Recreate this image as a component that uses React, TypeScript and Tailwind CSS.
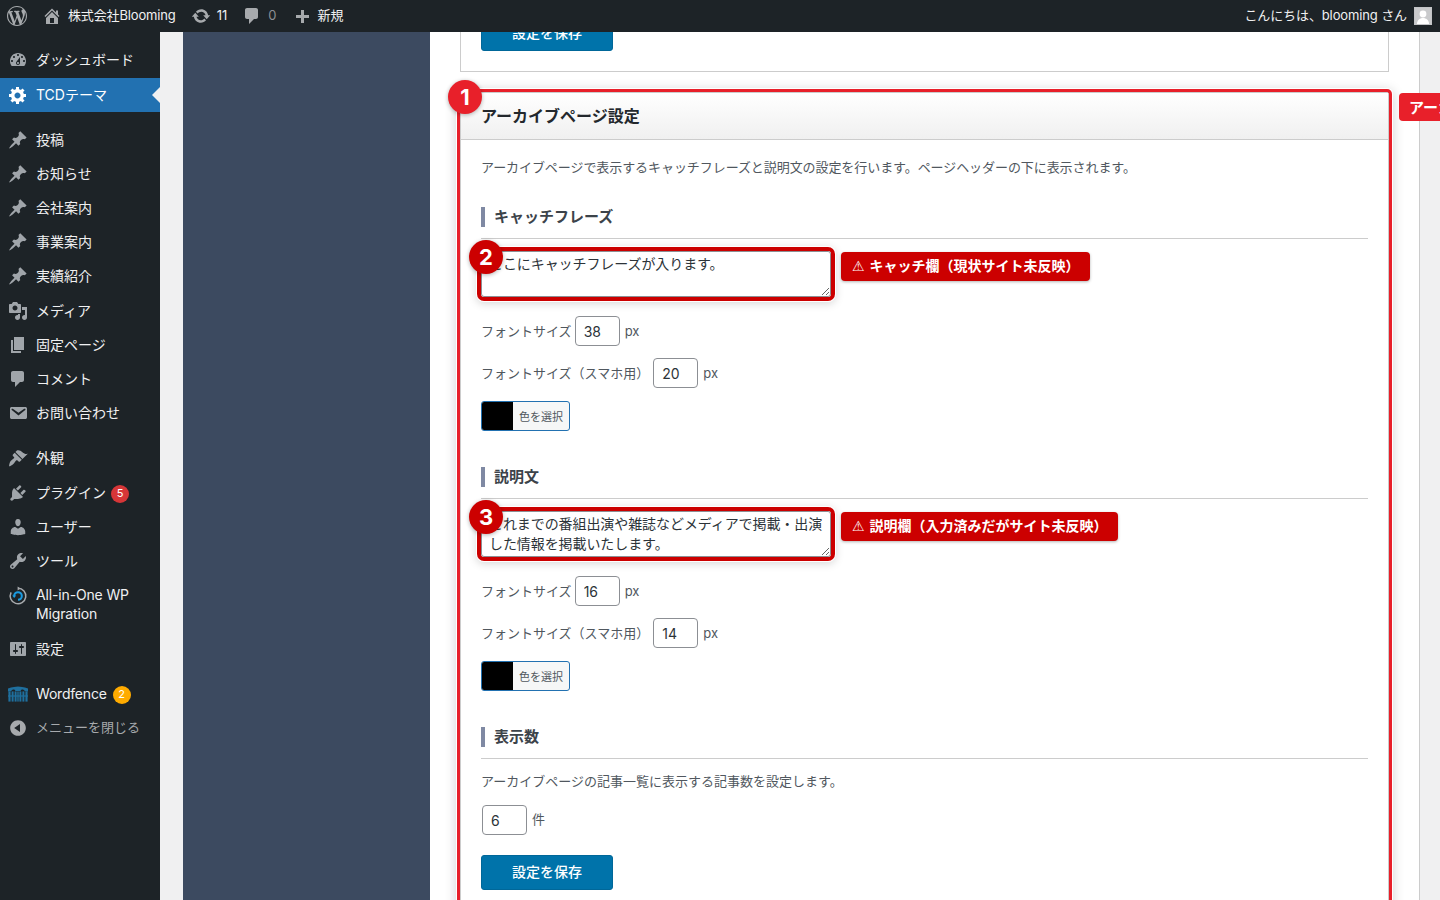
import React from "react";

const P: Record<string, string> = {
  wp: "M20 10c0-5.51-4.49-10-10-10C4.48 0 0 4.49 0 10c0 5.52 4.48 10 10 10 5.51 0 10-4.48 10-10zM7.78 15.37L4.37 6.22c.55-.02 1.17-.08 1.17-.08.5-.06.44-1.13-.06-1.11 0 0-1.45.11-2.37.11-.18 0-.37 0-.58-.01C4.12 2.69 6.87 1.11 10 1.11c2.33 0 4.45.87 6.05 2.34-.68-.11-1.65.39-1.65 1.58 0 .74.45 1.36.9 2.1.35.61.55 1.36.55 2.46 0 1.49-1.4 5-1.4 5l-3.03-8.37c.54-.02.82-.17.82-.17.5-.05.44-1.25-.06-1.22 0 0-1.44.12-2.38.12-.87 0-2.33-.12-2.33-.12-.5-.03-.56 1.2-.06 1.22l.92.08 1.26 3.41zM17.41 10c.24-.64.74-1.87.43-4.25.7 1.29 1.05 2.71 1.05 4.25 0 3.29-1.73 6.24-4.4 7.78.97-2.59 1.94-5.2 2.92-7.78zM6.1 18.09C3.12 16.65 1.11 13.53 1.11 10c0-1.3.23-2.48.72-3.59C3.25 10.3 4.67 14.2 6.1 18.09zm4.03-6.63l2.58 6.98c-.86.29-1.76.45-2.71.45-.79 0-1.57-.11-2.29-.33.81-2.38 1.62-4.74 2.42-7.1z",
  home: "M16 8.5l1.53 1.53-1.06 1.06L10 4.62l-6.47 6.47-1.06-1.06L10 2.5l4 4v-2h2v4zm-6-2.46l6 5.99V18H4v-5.97zM12 17v-5H8v5h4z",
  update: "M10.2 3.28c3.53 0 6.43 2.61 6.92 6h2.08l-3.5 4-3.5-4h2.32c-.45-1.97-2.21-3.45-4.32-3.45-1.45 0-2.73.71-3.54 1.78L4.95 5.66C6.23 4.2 8.11 3.28 10.2 3.28zm-.4 13.44c-3.52 0-6.43-2.61-6.92-6H.8l3.5-4c1.17 1.33 2.33 2.67 3.5 4H5.48c.45 1.97 2.21 3.45 4.32 3.45 1.45 0 2.73-.71 3.54-1.78l1.71 1.95c-1.28 1.46-3.15 2.38-5.25 2.38z",
  comment: "M5 2h9c1.1 0 2 .9 2 2v7c0 1.1-.9 2-2 2h-2l-5 5v-5H5c-1.1 0-2-.9-2-2V4c0-1.1.9-2 2-2z",
  plus: "M17 7v3h-5v5H9v-5H4V7h5V2h3v5h5z",
  dash: "M3.76 16h12.48c1.1-1.37 1.76-3.11 1.76-5 0-4.42-3.58-8-8-8s-8 3.58-8 8c0 1.89.66 3.63 1.76 5zM10 4c.55 0 1 .45 1 1s-.45 1-1 1-1-.45-1-1 .45-1 1-1zM6 6c.55 0 1 .45 1 1s-.45 1-1 1-1-.45-1-1 .45-1 1-1zm8 0c.55 0 1 .45 1 1s-.45 1-1 1-1-.45-1-1 .45-1 1-1zm-5.37 5.55L12 7v6c0 1.1-.9 2-2 2s-2-.9-2-2c0-.57.24-1.08.63-1.45zM4 10c.55 0 1 .45 1 1s-.45 1-1 1-1-.45-1-1 .45-1 1-1zm12 0c.55 0 1 .45 1 1s-.45 1-1 1-1-.45-1-1 .45-1 1-1zm-5 3c0-.55-.45-1-1-1s-1 .45-1 1 .45 1 1 1 1-.45 1-1z",
  gear: "M18 12h-2.18c-.17.7-.44 1.35-.81 1.93l1.54 1.54-2.1 2.1-1.54-1.54c-.58.36-1.23.63-1.91.79V19H8v-2.18c-.68-.16-1.33-.43-1.91-.79l-1.54 1.54-2.12-2.12 1.54-1.54c-.36-.58-.63-1.23-.79-1.91H1V9.03h2.17c.16-.7.44-1.35.8-1.94L2.43 5.55l2.1-2.1 1.54 1.54c.58-.37 1.24-.64 1.93-.81V2h3v2.18c.68.16 1.33.43 1.91.79l1.54-1.54 2.12 2.12-1.54 1.54c.36.59.64 1.24.8 1.94H18V12zm-8.5 1.5c1.66 0 3-1.34 3-3s-1.34-3-3-3-3 1.34-3 3 1.34 3 3 3z",
  pin: "M10.44 3.02l1.82-1.82 6.36 6.35-1.83 1.82c-1.05-.68-2.48-.57-3.41.36l-.75.75c-.92.93-1.04 2.35-.35 3.41l-1.83 1.82-2.41-2.41-2.8 2.79c-.42.42-3.38 2.71-3.8 2.29s1.86-3.39 2.28-3.81l2.79-2.79L4.1 9.36l1.83-1.82c1.05.69 2.48.57 3.4-.36l.75-.75c.93-.92 1.05-2.35.36-3.41z",
  media: "M13 11V4c0-.55-.45-1-1-1h-1.67L9 1H5L3.67 3H2c-.55 0-1 .45-1 1v7c0 .55.45 1 1 1h10c.55 0 1-.45 1-1zM7 4.5c1.38 0 2.5 1.12 2.5 2.5S8.38 9.5 7 9.5 4.5 8.38 4.5 7 5.62 4.5 7 4.5zM14 6h5v10.5c0 1.38-1.12 2.5-2.5 2.5S14 17.88 14 16.5s1.12-2.5 2.5-2.5c.17 0 .34.02.5.05V9h-3V6zm-4 8.05V13h2v3.5c0 1.38-1.12 2.5-2.5 2.5S7 17.88 7 16.5 8.12 14 9.5 14c.17 0 .34.02.5.05z",
  page: "M6 15V2h10v13H6zm-1 1h8v2H3V5h2v11z",
  mail: "M3.87 4h13.25C18.37 4 19 4.59 19 5.79v8.42c0 1.19-.63 1.79-1.88 1.79H3.87c-1.25 0-1.88-.6-1.88-1.79V5.79c0-1.2.63-1.79 1.88-1.79zm6.62 8.6l6.74-5.53c.24-.2.43-.66.13-1.07-.29-.41-.82-.42-1.17-.17l-5.7 3.86L4.8 5.83c-.35-.25-.88-.24-1.17.17-.3.41-.11.87.13 1.07z",
  brush: "M14.48 11.06L7.41 3.99l1.5-1.5c.5-.56 2.3-.47 3.51.32 1.21.8 1.43 1.28 2.91 2.1 1.18.64 2.45 1.26 4.45.85zm-.71.71L6.7 4.7 4.93 6.47c-.39.39-.39 1.02 0 1.41l1.06 1.06c.39.39.39 1.03 0 1.42-.6.6-1.43 1.11-2.21 1.69-.35.26-.7.53-1.01.84C1.5 14.2.9 18.1 1.2 18.3S4.3 17 5.58 15.7c.31-.31.58-.66.84-1.01.58-.78 1.09-1.61 1.69-2.21.39-.39 1.03-.39 1.42 0l1.06 1.06c.39.39 1.02.39 1.41 0z",
  plug: "M13.11 4.36L9.87 7.6 8 5.73l3.24-3.24c.35-.34 1.05-.2 1.56.32.52.51.66 1.21.31 1.55zm-8 1.77l.91-1.12 9.01 9.01-1.19.84c-.71.71-2.63 1.16-3.82 1.16H6.14L4.9 17.26c-.59.59-1.54.59-2.12 0-.59-.58-.59-1.53 0-2.12l1.24-1.24v-3.88c0-1.13.4-3.19 1.09-3.89zm7.26 3.97l3.24-3.24c.34-.35 1.04-.21 1.55.31.52.51.66 1.21.31 1.55l-3.24 3.25z",
  user: "M10 9.25c-2.27 0-2.73-3.44-2.73-3.44C7 4.02 7.82 2 9.97 2c2.16 0 2.98 2.02 2.71 3.81 0 0-.41 3.44-2.68 3.44zm0 2.57L12.72 10c2.39 0 4.52 2.33 4.52 4.53v2.49s-3.65 1.13-7.24 1.13c-3.65 0-7.24-1.13-7.24-1.13v-2.49c0-2.25 1.94-4.48 4.47-4.48z",
  tool: "M16.68 9.77c-1.34 1.34-3.3 1.67-4.95.99l-5.41 6.52c-.99.99-2.59.99-3.58 0s-.99-2.59 0-3.57l6.52-5.42c-.68-1.65-.35-3.61.99-4.95 1.28-1.28 3.12-1.62 4.72-1.06l-2.89 2.89 2.82 2.82 2.86-2.87c.53 1.58.18 3.39-1.08 4.65zM3.81 16.21c.4.39 1.04.39 1.43 0 .4-.4.4-1.04 0-1.43-.39-.4-1.03-.4-1.43 0-.39.39-.39 1.03 0 1.43z",
  settings: "M18 16V4c0-.55-.45-1-1-1H3c-.55 0-1 .45-1 1v12c0 .55.45 1 1 1h14c.55 0 1-.45 1-1zM8 11h1c.55 0 1 .45 1 1s-.45 1-1 1H8v1.5c0 .28-.22.5-.5.5s-.5-.22-.5-.5V13H6c-.55 0-1-.45-1-1s.45-1 1-1h1V5.5c0-.28.22-.5.5-.5s.5.22.5.5V11zm5-2h-1c-.55 0-1-.45-1-1s.45-1 1-1h1V5.5c0-.28.22-.5.5-.5s.5.22.5.5V7h1c.55 0 1 .45 1 1s-.45 1-1 1h-1v5.5c0 .28-.22.5-.5.5s-.5-.22-.5-.5V9z",
  collapse: "M10 2.16c4.33 0 7.84 3.51 7.84 7.84s-3.51 7.84-7.84 7.84S2.16 14.33 2.16 10 5.71 2.16 10 2.16zm2 11.72V6.12L6.18 9.97z",
};

function Dash({ name, className }: { name: string; className: string }) {
  return (
    <svg viewBox="0 0 20 20" className={className} fill="currentColor" aria-hidden="true">
      <path d={P[name]} />
    </svg>
  );
}

function MigrationIcon() {
  return (
    <svg viewBox="0 0 20 20" className="w-5 h-5 shrink-0" fill="none" aria-hidden="true">
      <path d="M10 2.2a7.8 7.8 0 1 1-6.9 4.2" stroke="#a7aaad" strokeWidth="1.5" />
      <path d="M9.6 0.4 12.4 2.4 9.6 4.4z" fill="#a7aaad" />
      <path d="M6.2 10a3.8 3.8 0 1 1 3.8 3.8" stroke="#1a9ae0" strokeWidth="2.1" />
      <path d="M4.2 9.4h4l-2 2.6z" fill="#1a9ae0" />
    </svg>
  );
}

function WordfenceIcon() {
  return (
    <svg viewBox="0 0 20 16" className="w-5 h-4 shrink-0" fill="#1f6f9e" aria-hidden="true">
      <path d="M0 2.6 3 1.6 6 .9 10 .5 14 .9 17 1.6 20 2.6V5.4L17 5.2C15.5 3.2 13.5 3 12.6 5L7.4 5C6.5 3 4.5 3.2 3 5.2L0 5.4z" />
      <rect x="0.4" y="5.4" width="2.2" height="10.2" />
      <rect x="3.6" y="5.4" width="2" height="10.2" />
      <rect x="6.6" y="5.4" width="2" height="10.2" />
      <rect x="11.4" y="5.4" width="2" height="10.2" />
      <rect x="14.4" y="5.4" width="2" height="10.2" />
      <rect x="17.4" y="5.4" width="2.2" height="10.2" />
      <rect x="9.3" y="5.4" width="1.4" height="10.2" />
      <rect x="0" y="9.4" width="20" height="1.2" />
    </svg>
  );
}

type Item = { label: string; icon: string; badge?: string; nudge?: boolean };

function MenuRow({ label, icon, badge, nudge }: Item) {
  return (
    <div className={`h-[34px] flex items-center pl-2 text-[14px] text-[#f0f0f1] ${nudge ? "mt-px" : ""}`}>
      <Dash name={icon} className="w-5 h-5 text-[#a0a5aa] shrink-0" />
      <span className="ml-2 mb-[2px] whitespace-nowrap">{label}</span>
      {badge && (
        <span className="ml-[5px] mt-px w-[18px] h-[18px] rounded-full bg-[#d63638] text-white text-[11px] flex items-center justify-center">
          {badge}
        </span>
      )}
    </div>
  );
}

function Sidebar() {
  const first: Item[] = [
    { label: "投稿", icon: "pin" },
    { label: "お知らせ", icon: "pin" },
    { label: "会社案内", icon: "pin" },
    { label: "事業案内", icon: "pin" },
    { label: "実績紹介", icon: "pin" },
    { label: "メディア", icon: "media", nudge: true },
    { label: "固定ページ", icon: "page" },
    { label: "コメント", icon: "comment" },
    { label: "お問い合わせ", icon: "mail" },
  ];
  const second: Item[] = [
    { label: "外観", icon: "brush" },
    { label: "プラグイン", icon: "plug", badge: "5", nudge: true },
    { label: "ユーザー", icon: "user" },
    { label: "ツール", icon: "tool" },
  ];
  return (
    <nav className="w-40 shrink-0 bg-[#1d2327] pt-[11px]">
      <MenuRow label="ダッシュボード" icon="dash" />
      <div className="relative h-[34px] mt-px flex items-center pl-2 bg-[#2271b1] text-white text-[14px]">
        <Dash name="gear" className="w-5 h-5 text-white shrink-0" />
        <span className="ml-2 mb-[2px]">TCDテーマ</span>
        <span className="absolute right-0 top-[9px] border-y-8 border-r-8 border-y-transparent border-r-[#f0f0f1]" />
      </div>
      <div className="mt-[11px]">
        {first.map((i) => (
          <MenuRow key={i.label} {...i} />
        ))}
      </div>
      <div className="mt-[11px]">
        {second.map((i) => (
          <MenuRow key={i.label} {...i} />
        ))}
        <div className="flex pl-2 pt-[8px] pb-[9px] text-[14px] leading-[19px] text-[#f0f0f1]">
          <MigrationIcon />
          <span className="ml-2 -mt-px tracking-[-0.15px]">
            All-in-One WP
            <br />
            Migration
          </span>
        </div>
        <MenuRow label="設定" icon="settings" />
      </div>
      <div className="mt-[11px]">
        <div className="h-[34px] flex items-center pl-2 text-[14px] text-[#f0f0f1]">
          <WordfenceIcon />
          <span className="ml-2 mb-[2px] tracking-[-0.2px]">Wordfence</span>
          <span className="ml-[6px] mt-px w-[18px] h-[18px] rounded-full bg-[#ffab00] text-white text-[11px] flex items-center justify-center">
            2
          </span>
        </div>
        <div className="h-[34px] flex items-center pl-2 text-[13px] text-[#a7aaad]">
          <Dash name="collapse" className="w-5 h-5 shrink-0" />
          <span className="ml-2">メニューを閉じる</span>
        </div>
      </div>
    </nav>
  );
}

function TopBar() {
  return (
    <header className="relative z-20 h-8 shrink-0 bg-[#1d2327] flex items-center justify-between text-[13px] text-[#f0f0f1] pl-[7px] pr-2">
      <div className="flex items-center">
        <Dash name="wp" className="w-5 h-5 text-[#a7aaad]" />
        <Dash name="home" className="w-5 h-5 ml-[15px] text-[#a7aaad]" />
        <span className="ml-[6px] tracking-[-0.15px]">株式会社Blooming</span>
        <Dash name="update" className="w-5 h-5 ml-[15px] text-[#a7aaad]" />
        <span className="ml-[6px]">11</span>
        <Dash name="comment" className="w-5 h-5 ml-[15px] text-[#a7aaad]" />
        <span className="ml-[6px] text-[#8c8f94]">0</span>
        <Dash name="plus" className="w-5 h-5 ml-[16px] mt-[3px] text-[#a7aaad]" />
        <span className="ml-[5px]">新規</span>
      </div>
      <div className="flex items-center">
        <span className="tracking-[-0.12px]">こんにちは、blooming さん</span>
        <span className="ml-[7px] w-[18px] h-[18px] border border-[#c3c4c7] bg-[#c9cacc] flex items-end justify-center overflow-hidden">
          <svg viewBox="0 0 16 16" className="w-4 h-4" fill="#ffffff" aria-hidden="true">
            <circle cx="8" cy="6" r="3.4" />
            <path d="M2 16c0-4 3-6 6-6s6 2 6 6z" />
          </svg>
        </span>
      </div>
    </header>
  );
}

function Badge({ n, className }: { n: string; className: string }) {
  return (
    <span
      className={`absolute w-[34px] h-[34px] rounded-full text-white text-[22px] font-bold flex items-center justify-center z-10 shadow-[0_1px_4px_rgba(0,0,0,0.3)] ${className}`}
    >
      {n}
    </span>
  );
}

function SectionHead({ title }: { title: string }) {
  return (
    <div className="border-b border-[#ccc] pb-[11px]">
      <h3 className="h-5 border-l-[4px] border-[#7f89a3] pl-[9px] text-[15px] font-bold leading-5 text-[#3c434a]">{title}</h3>
    </div>
  );
}

function NumberInput({ value, className = "" }: { value: string; className?: string }) {
  return (
    <input
      defaultValue={value}
      className={`w-[45px] h-[30px] shrink-0 border border-[#8c8f94] rounded-[4px] bg-white pl-2 text-[14px] text-[#2c3338] ${className}`}
    />
  );
}

function SizeRow({ label, value, className, gap }: { label: string; value: string; className: string; gap: string }) {
  return (
    <div className={`flex items-center text-[13px] text-[#50575e] ${className}`}>
      <span className="mt-[2px]">{label}</span>
      <NumberInput value={value} className={gap} />
      <span className="ml-[5px] mt-[2px]">px</span>
    </div>
  );
}

function ColorButton() {
  return (
    <div className="mt-[13px] w-[89px] h-[30px] flex border border-[#2271b1] rounded-[3px] overflow-hidden bg-[#f6f7f7]">
      <span className="w-[31px] bg-black" />
      <span className="pl-[6px] text-[11px] leading-[30px] text-[#50575e]">色を選択</span>
    </div>
  );
}

function SaveButton({ className = "" }: { className?: string }) {
  return (
    <div
      className={`w-[132px] h-[35px] shrink-0 flex items-center justify-center pb-[2px] rounded-[3px] bg-[#0073aa] border border-[#006799] text-white text-[14px] font-medium ${className}`}
    >
      設定を保存
    </div>
  );
}

function TextField({ n, note, value }: { n: string; note: string; value: string }) {
  return (
    <div className="mt-3 flex items-start gap-[10px]">
      <div className="relative w-[350px] h-[46px] rounded-[3px] shadow-[0_0_0_4px_#cc0000,0_0_0_5px_#fff,0_2px_8px_5px_rgba(0,0,0,0.15)]">
        <Badge n={n} className="-left-3 -top-[11px] bg-[#cc0000]" />
        <textarea
          defaultValue={value}
          className="block w-full h-full border border-[#8c8f94] rounded-[3px] bg-white pl-[7px] pr-[4px] pt-[2px] text-[14px] leading-5 tracking-[-0.08px] text-[#2c3338] overflow-hidden"
        />
      </div>
      <div className="mt-px h-[29px] pl-[11px] pr-[10px] pb-[2px] flex items-center rounded-[4px] bg-[#cc0000] text-white text-[14px] font-bold whitespace-nowrap shadow-[0_1px_3px_rgba(0,0,0,0.3)]">
        <span className="mr-[5px] [font-family:'DejaVu_Sans',sans-serif] font-normal text-[14px] leading-none">⚠</span>
        {note}
      </div>
    </div>
  );
}

export default function App() {
  return (
    <div className="h-[900px] w-[1440px] overflow-hidden flex flex-col bg-[#f0f0f1] antialiased [font-family:'Inter','Noto_Sans_CJK_JP',sans-serif]">
      <TopBar />
      <div className="flex flex-1 min-h-0">
        <Sidebar />
        <div className="w-[23px] shrink-0" />
        <div className="w-[247px] shrink-0 bg-[#3c4a60]" />
        <main className="w-[990px] shrink-0 bg-white border-r border-[#ccc] pl-[30px] pr-[30px] min-h-0">
          <div className="h-[40px] border-x border-b border-[#ccc] px-5 pb-5 flex flex-col justify-end">
            <SaveButton />
          </div>
          <section className="relative mt-5 border border-[#ccc] bg-white rounded-[2px] shadow-[0_0_0_3px_#e8202a,0_0_0_4px_#fff,0_2px_12px_4px_rgba(0,0,0,0.18)]">
            <Badge n="1" className="-left-[13px] -top-[13px] bg-[#e8202a]" />
            <div className="absolute left-[938px] top-0 h-[28px] w-[120px] pl-[10px] rounded-[4px] bg-[#e8202a] text-white text-[15px] font-bold leading-[29px] whitespace-nowrap">
              アーカイブ設定
            </div>
            <div className="h-[47px] border-b border-[#ccc] bg-linear-to-b from-white to-[#f0f0f0] px-5 text-[16px] font-bold leading-[46px] text-[#23282d]">
              アーカイブページ設定
            </div>
            <div className="px-5 pt-[17px] pb-10">
              <p className="text-[13px] leading-5 tracking-[-0.07px] text-[#50575e]">
                アーカイブページで表示するキャッチフレーズと説明文の設定を行います。ページヘッダーの下に表示されます。
              </p>

              <div className="mt-[30px]">
                <SectionHead title="キャッチフレーズ" />
                <TextField n="2" note="キャッチ欄（現状サイト未反映）" value="ここにキャッチフレーズが入ります。" />
                <SizeRow label="フォントサイズ" value="38" gap="ml-[3px]" className="mt-[19px]" />
                <SizeRow label="フォントサイズ（スマホ用）" value="20" gap="ml-[4px]" className="mt-3" />
                <ColorButton />
              </div>

              <div className="mt-[36px]">
                <SectionHead title="説明文" />
                <TextField
                  n="3"
                  note="説明欄（入力済みだがサイト未反映）"
                  value="これまでの番組出演や雑誌などメディアで掲載・出演した情報を掲載いたします。"
                />
                <SizeRow label="フォントサイズ" value="16" gap="ml-[3px]" className="mt-[19px]" />
                <SizeRow label="フォントサイズ（スマホ用）" value="14" gap="ml-[4px]" className="mt-3" />
                <ColorButton />
              </div>

              <div className="mt-[36px]">
                <SectionHead title="表示数" />
                <p className="mt-[12px] text-[13px] leading-5 text-[#50575e]">
                  アーカイブページの記事一覧に表示する記事数を設定します。
                </p>
                <div className="mt-[14px] flex items-center text-[13px] text-[#50575e]">
                  <NumberInput value="6" className="ml-px" />
                  <span className="ml-[5px]">件</span>
                </div>
                <SaveButton className="mt-5" />
              </div>
            </div>
          </section>
        </main>
      </div>
    </div>
  );
}
